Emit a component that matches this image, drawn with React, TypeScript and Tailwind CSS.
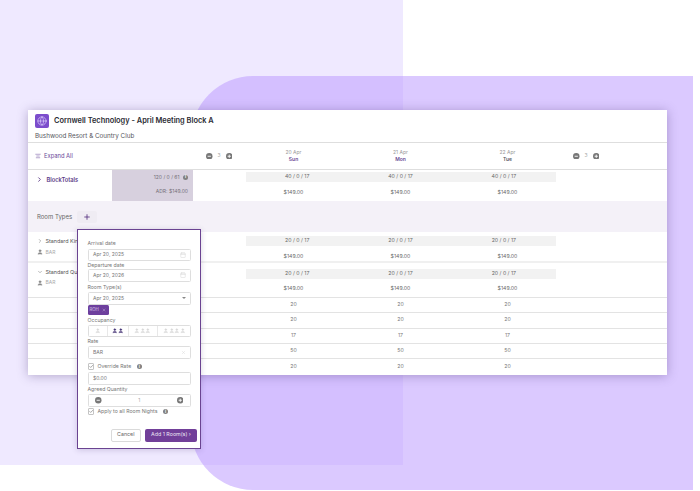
import React from "react";
import { Globe, ChevronRight, ChevronDown, Calendar, Plus, X, Check, AlignCenter, User } from "lucide-react";

const Round = ({ kind }: { kind: "-" | "+" }) => (
  <svg viewBox="0 0 8 8" className="h-[6.5px] w-[6.5px] shrink-0">
    <circle cx="4" cy="4" r="4" fill="#777" />
    <path d={kind === "+" ? "M2 4H6M4 2V6" : "M2 4H6"} stroke="#fff" strokeWidth="1.1" />
  </svg>
);

const Stepper = ({ n }: { n: string }) => (
  <div className="flex items-center gap-[5px]">
    <Round kind="-" />
    <span className="w-[3px] text-center text-[5px] text-[#aaa]">{n}</span>
    <Round kind="+" />
  </div>
);

const Info = () => (
  <span className="flex h-[5px] w-[5px] items-center justify-center rounded-full bg-[#808080] text-[4px] font-bold leading-none text-white">i</span>
);

const Day = ({ date, day, purple }: { date: string; day: string; purple?: boolean }) => (
  <div className="flex flex-col items-center leading-[7.5px]">
    <span className="text-[5px] text-[#9a9a9a]">{date}</span>
    <span className={`text-[5px] font-semibold ${purple ? "text-[#6a4a94]" : "text-[#5a5a64]"}`}>{day}</span>
  </div>
);

const Grid = ({ children, className = "" }: { children: React.ReactNode; className?: string }) => (
  <div className={`grid grid-cols-[84px_81px_47px_107px_107px_107px_106px] ${className}`}>{children}</div>
);

const Cols = ({ a, b, barTop, h }: { a: string; b: string; barTop: string; h: string }) => {
  const cells = [0, 1, 2];
  return (
    <div className={`col-span-3 flex flex-col ${h}`}>
      <div className={`${barTop} ml-[6px] mr-[5px] grid h-[10px] grid-cols-3 items-center bg-[#f2f2f2] text-[5.2px] text-[#666]`}>
        {cells.map((i) => (
          <span key={i} className="ml-[-6px] mr-[-5px] text-center">{a}</span>
        ))}
      </div>
      <div className="mt-[5.5px] grid grid-cols-3 text-[5.2px] leading-[8px] text-[#666]">
        {cells.map((i) => (
          <span key={i} className="text-center">{b}</span>
        ))}
      </div>
    </div>
  );
};

const SubRow = ({ v, last }: { v: string; last?: boolean }) => (
  <Grid className={`${last ? "h-[16px]" : "h-[15.25px] border-b border-[#e3e3e3]"} items-center`}>
    <span className="col-span-3" />
    {[0, 1, 2].map((i) => (
      <span key={i} className="text-center text-[5.2px] text-[#777]">{v}</span>
    ))}
  </Grid>
);

const Label = ({ children, className = "" }: { children: React.ReactNode; className?: string }) => (
  <div className={`text-[5.2px] leading-[7px] text-[#777] ${className}`}>{children}</div>
);

const Field = ({ children, right, className = "" }: { children?: React.ReactNode; right?: React.ReactNode; className?: string }) => (
  <div className={`flex h-[12.5px] items-center justify-between rounded-[1.5px] border border-[#dedede] bg-white pl-[4.5px] pr-[4px] text-[5px] text-[#777] ${className}`}>
    <span>{children}</span>
    {right}
  </div>
);

const Tick = () => (
  <span className="flex h-[6.5px] w-[6.5px] items-center justify-center rounded-[1px] border border-[#c4c4c4] bg-white">
    <Check className="h-[5px] w-[5px] text-[#666]" strokeWidth={3} />
  </span>
);

const People = ({ n, active }: { n: number; active?: boolean }) => (
  <span className="flex items-center justify-center">
    {Array.from({ length: n }).map((_, i) => (
      <User key={i} className={`h-[5.5px] w-[5.5px] ${active ? "fill-[#4b3a7a] text-[#4b3a7a]" : "fill-[#dadada] text-[#dadada]"}`} strokeWidth={2} />
    ))}
  </span>
);

const RoomLabel = ({ name, open }: { name: string; open?: boolean }) => (
  <div className="col-span-3 pl-[9px] pt-[5px]">
    <div className="flex items-center gap-[2.5px] text-[5.4px] leading-[8px] text-[#555]">
      {open ? <ChevronDown className="h-[6px] w-[6px] text-[#777]" strokeWidth={2} /> : <ChevronRight className="h-[6px] w-[6px] text-[#777]" strokeWidth={2} />}
      {name}
    </div>
    <div className="mt-[3.5px] flex items-center gap-[2.5px] text-[5px] leading-[7px] text-[#aaa]">
      <User className="h-[6px] w-[6px] fill-[#888] text-[#888]" />
      BAR
    </div>
  </div>
);

export default function App() {
  return (
    <div className="relative isolate h-[491px] w-[700px] overflow-hidden bg-white font-['Inter',sans-serif]">
      <div className="absolute left-0 top-0 -z-10 h-[465px] w-[403px] bg-[#efe9ff]" />
      <div className="absolute left-[191px] top-[76px] -z-10 h-[414px] w-[502px] rounded-l-[62px] bg-[rgba(190,157,255,0.55)]" />

      <div className="pl-[28px] pt-[110px]">
        <div className="w-[639px] bg-white shadow-[0_1px_10px_rgba(70,50,110,0.35)]">
          {/* Header */}
          <div className="h-[33px] border-b border-[#dedede] pl-[7px] pt-[4px]">
            <div className="flex items-center gap-[5px]">
              <span className="flex h-[14px] w-[14px] items-center justify-center rounded-[2px] bg-[#7c4dcc]">
                <Globe className="h-[10px] w-[10px] text-[#e4d8ff]" strokeWidth={1.5} />
              </span>
              <span className="text-[7.4px] font-semibold text-[#2c2c34]">Cornwell Technology - April Meeting Block A</span>
            </div>
            <div className="mt-[4px] text-[6.3px] leading-[8px] text-[#55555c]">Bushwood Resort &amp; Country Club</div>
          </div>

          {/* Toolbar */}
          <Grid className="h-[27px] items-center border-b border-[#dedede]">
            <div className="col-span-2 flex items-center gap-[3px] pl-[7px] text-[5.8px] text-[#6a4a9a]">
              <AlignCenter className="h-[6px] w-[6px]" strokeWidth={2} />
              <span>Expand All</span>
            </div>
            <div className="ml-[13px]"><Stepper n="3" /></div>
            <Day date="20 Apr" day="Sun" purple />
            <Day date="21 Apr" day="Mon" purple />
            <Day date="22 Apr" day="Tue" />
            <div className="ml-[12px]"><Stepper n="3" /></div>
          </Grid>

          {/* Block totals */}
          <Grid className="h-[31px]">
            <div className="flex items-start gap-[3.5px] pl-[8px] pt-[6px] text-[5.7px] font-semibold leading-[8px] text-[#5c3a86]">
              <ChevronRight className="h-[7px] w-[7px]" strokeWidth={3} />
              BlockTotals
            </div>
            <div className="flex flex-col items-end gap-[7px] bg-[#d7d0de] pr-[5px] pt-[3.5px] text-[5px] leading-[7px] text-[#767079]">
              <span className="flex items-center gap-[3.5px]">120 / 0 / 61 <Info /></span>
              <span>ADR: $149.00</span>
            </div>
            <span />
            <Cols a="40 / 0 / 17" b="$149.00" barTop="mt-[2px]" h="h-[31px]" />
          </Grid>

          {/* Room types band */}
          <div className="flex h-[31px] items-center gap-[5px] bg-[#f4f1f8] pl-[9px] text-[6px] text-[#666]">
            <span>Room Types</span>
            <span className="flex h-[12px] w-[20px] items-center justify-center rounded-[2px] bg-[#efecf3]">
              <Plus className="h-[8px] w-[8px] text-[#55307f]" strokeWidth={2.5} />
            </span>
          </div>

          {/* King */}
          <Grid className="h-[30.5px] border-b-2 border-[#f0f0f0]">
            <RoomLabel name="Standard King" />
            <Cols a="20 / 0 / 17" b="$149.00" barTop="mt-[4px]" h="h-[30px]" />
          </Grid>

          {/* Queen */}
          <Grid className="h-[35.5px] border-b border-[#e3e3e3]">
            <RoomLabel name="Standard Queen" open />
            <Cols a="20 / 0 / 17" b="$149.00" barTop="mt-[6px]" h="h-[35px]" />
          </Grid>

          <SubRow v="20" />
          <SubRow v="20" />
          <SubRow v="17" />
          <SubRow v="50" />
          <SubRow v="20" last />
        </div>
      </div>

      {/* Popover */}
      <div className="absolute left-[77px] top-[229px] h-[219.5px] w-[124px] border-[1.5px] border-[#6a4391] bg-white pl-[9.5px] pr-[9px] pt-[10px] shadow-[0_1px_6px_rgba(60,40,100,0.2)]">
        <Label>Arrival date</Label>
        <Field className="mt-[1.5px]" right={<Calendar className="h-[6px] w-[6px] text-[#d6d6d6]" />}>Apr 20, 2025</Field>
        <Label className="mt-[0.7px]">Departure date</Label>
        <Field className="mt-[0.5px]" right={<Calendar className="h-[6px] w-[6px] text-[#d6d6d6]" />}>Apr 20, 2026</Field>
        <Label className="mt-[2px]">Room Type(s)</Label>
        <Field className="mt-[1.5px]" right={<span className="h-0 w-0 border-x-[2.5px] border-t-[2.5px] border-x-transparent border-t-[#888]" />}>Apr 20, 2025</Field>
        <div className="ml-[0.5px] flex h-[10.5px] w-[21px] items-center gap-[3px] rounded-[1.5px] bg-[#6d3f9d] pl-[1.5px] text-[4.3px] text-[#ddd0ee]">
          ROH <X className="h-[4px] w-[4px]" strokeWidth={2} />
        </div>
        <Label className="mt-[1.5px]">Occupancy</Label>
        <div className="mt-[1px] grid h-[12.5px] grid-cols-[18px_22px_29px_33px] items-center rounded-[1.5px] border border-[#dedede]">
          <People n={1} />
          <span className="flex h-full items-center justify-center border-x border-[#e8e8e8]"><People n={2} active /></span>
          <span className="flex h-full items-center justify-center border-r border-[#e8e8e8]"><People n={3} /></span>
          <People n={4} />
        </div>
        <Label className="mt-[0.5px]">Rate</Label>
        <Field className="mt-[1.5px]" right={<X className="h-[5px] w-[5px] text-[#d6d6d6]" />}>BAR</Field>
        <div className="mt-[4.5px] flex h-[7px] items-center gap-[3.5px] text-[5.2px] text-[#777]">
          <Tick /> Override Rate <span className="ml-[2px]"><Info /></span>
        </div>
        <Field className="mt-[2.2px]">$0.00</Field>
        <Label className="mt-[1.3px]">Agreed Quantity</Label>
        <div className="mt-[1px] flex h-[12.5px] items-center justify-between rounded-[1.5px] border border-[#dedede] px-[6.5px] text-[5px] text-[#aaa]">
          <Round kind="-" />
          <span>1</span>
          <Round kind="+" />
        </div>
        <div className="mt-[1.5px] flex h-[7px] items-center gap-[3.5px] text-[5.2px] text-[#777]">
          <Tick /> Apply to all Room Nights <span className="ml-[2px]"><Info /></span>
        </div>
        <div className="mr-[-6px] mt-[14px] flex justify-end gap-[4px]">
          <button className="h-[12.5px] w-[30.5px] rounded-[2px] border border-[#dadada] bg-white text-[5.3px] text-[#666]">Cancel</button>
          <button className="h-[12.5px] w-[52px] rounded-[2px] bg-[#713f99] text-[5.3px] text-[#eee6f6]">Add 1 Room(s) ›</button>
        </div>
      </div>
    </div>
  );
}
